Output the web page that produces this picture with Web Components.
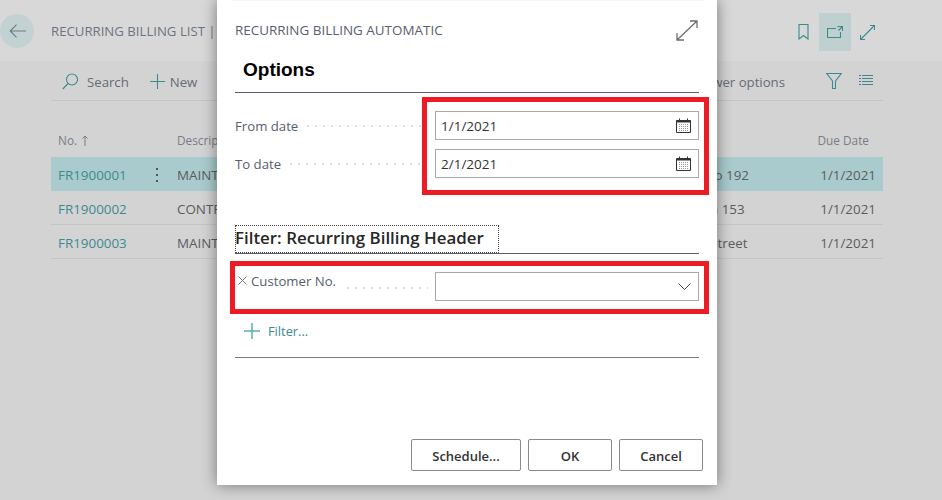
<!DOCTYPE html>
<html lang="en">
<head>
<meta charset="utf-8">
<title>Recurring Billing</title>
<style>
  html, body { margin: 0; height: 500px; overflow: hidden; background: #d3d3d3; }
  body { font-family: "Open Sans", "Noto Sans", sans-serif; font-size: 13px; }
</style>
</head>
<body>
<bc-list-page>
  <bc-page-header slot="header" caption="RECURRING BILLING LIST |"></bc-page-header>
  <bc-toolbar slot="toolbar"></bc-toolbar>
  <bc-list-head slot="list"></bc-list-head>
  <bc-list-row slot="list" selected no="FR1900001" desc="MAINT" addr="Campo 192" due="1/1/2021"></bc-list-row>
  <bc-list-row slot="list" no="FR1900002" desc="CONTR" addr="Ronda 153" due="1/1/2021"></bc-list-row>
  <bc-list-row slot="list" no="FR1900003" desc="MAINT" addr="High Street" due="1/1/2021"></bc-list-row>
</bc-list-page>

<bc-dialog caption="RECURRING BILLING AUTOMATIC">
  <bc-options-title>Options</bc-options-title>
  <bc-field label="From date" value="1/1/2021" kind="date"></bc-field>
  <bc-field label="To date" value="2/1/2021" kind="date"></bc-field>
  <bc-filter-title>Filter: Recurring Billing Header</bc-filter-title>
  <bc-field label="Customer No." kind="select" removable></bc-field>
  <bc-add-filter>Filter...</bc-add-filter>
  <bc-button slot="actions" style="width:110px">Schedule...</bc-button>
  <bc-button slot="actions" style="width:84px">OK</bc-button>
  <bc-button slot="actions" style="width:84px">Cancel</bc-button>
</bc-dialog>

<script>
const TEAL = '#3c8a8e';

class BcListPage extends HTMLElement {
  constructor() {
    super();
    this.attachShadow({ mode: 'open' });
    this.shadowRoot.innerHTML = `
      <style>
        :host { display: flex; flex-direction: column; width: 942px; height: 500px; }
        .body { padding: 0 59px 0 51px; display: flex; flex-direction: column; }
        .list { display: flex; flex-direction: column; margin-top: 21px; }
      </style>
      <slot name="header"></slot>
      <div class="body">
        <slot name="toolbar"></slot>
        <div class="list"><slot name="list"></slot></div>
      </div>
    `;
  }
}

class BcPageHeader extends HTMLElement {
  constructor() {
    super();
    this.attachShadow({ mode: 'open' });
    this.shadowRoot.innerHTML = `
      <style>
        :host { display: flex; align-items: center; height: 61px; background: #d8d8d8; color: #6c7480; }
        .back { width: 34px; height: 34px; margin-right: 17px; border-radius: 50%; background: #c2d2d2; display: flex; align-items: center; justify-content: center; }
        .title { flex: 1; font-size: 13.2px; }
        .icons { display: flex; height: 38px; margin: 3px 59px 0 0; }
        .ico { width: 32px; height: 38px; display: flex; align-items: center; justify-content: center; }
        .ico.on { background: #bfd0d1; }
      </style>
      <div class="back">
        <svg width="17" height="14" viewBox="0 0 17 14" fill="none" stroke="#6e7a7c" stroke-width="1.1"><path d="M17 7H1.200M7.500 .7 1.200 7 7.500 13.300"/></svg>
      </div>
      <div class="title"></div>
      <div class="icons">
        <div class="ico"><svg width="11" height="16" viewBox="0 0 11 16" fill="none" stroke="${TEAL}" stroke-width="1.1"><path d="M1 .5h9v14.500L5.500 11.500 1 15z"/></svg></div>
        <div class="ico on"><svg width="16" height="12" viewBox="0 0 16 12" fill="none" stroke="${TEAL}" stroke-width="1.1"><path d="M9 2.500H.5v9h13V6M10.500 .5H15.500V5M15.500 .5 11.500 4.500"/></svg></div>
        <div class="ico"><svg width="15" height="15" viewBox="0 0 15 15" fill="none" stroke="${TEAL}" stroke-width="1.1"><path d="M10 .5h4.500v4.500M14.500 .5 .5 14.500M.5 10v4.500h4.500"/></svg></div>
      </div>
    `;
    this.shadowRoot.querySelector('.title').textContent = this.getAttribute('caption');
  }
}

class BcToolbar extends HTMLElement {
  constructor() {
    super();
    this.attachShadow({ mode: 'open' });
    this.shadowRoot.innerHTML = `
      <style>
        :host { display: flex; align-items: center; box-sizing: border-box; height: 40px; padding-top: 2px; border-bottom: 1px solid #c4c4ca; color: #666c74; font-size: 13.2px; }
        .act { display: flex; align-items: center; }
        svg { display: block; }
        .search { margin-left: 11px; gap: 9px; }
        .new { margin-left: 21px; gap: 5px; }
        .spacer { flex: 1; }
        .filter { margin-left: 41px; margin-top: -2px; }
        .lines { margin-left: 17px; margin-right: 10px; margin-top: -2px; }
      </style>
      <div class="act search">
        <svg width="16" height="17" viewBox="0 0 16 17" fill="none" stroke="${TEAL}" stroke-width="1.1"><circle cx="10" cy="6.500" r="5.500"/><path d="M6 10.500 .8 16"/></svg>
        <span>Search</span>
      </div>
      <div class="act new">
        <svg width="15" height="15" viewBox="0 0 15 15" fill="none" stroke="${TEAL}" stroke-width="1.1"><path d="M7.500 0v15M0 7.500h15"/></svg>
        <span>New</span>
      </div>
      <div class="spacer"></div>
      <div class="act">Fewer options</div>
      <svg class="filter" width="16" height="16" viewBox="0 0 16 16" fill="none" stroke="${TEAL}" stroke-width="1.1"><path d="M.7 .5h14.600L9.500 8v7.500h-3V8z"/></svg>
      <svg class="lines" width="14" height="11" viewBox="0 0 14 11" fill="none" stroke="${TEAL}" stroke-width="1"><path d="M3 .5h11M3 3.500h11M3 6.500h11M3 9.500h11M0 .5h2M0 3.500h2M0 6.500h2M0 9.500h2"/></svg>
    `;
  }
}

const LIST_COLUMNS = 'grid-template-columns: 96px 30px 501px 1fr 64px;';

class BcListHead extends HTMLElement {
  constructor() {
    super();
    this.attachShadow({ mode: 'open' });
    this.shadowRoot.innerHTML = `
      <style>
        :host { display: grid; ${LIST_COLUMNS} box-sizing: border-box; height: 35px; padding-top: 1px; align-items: center; color: #777d85; font-size: 11.8px; }
        .no { padding-left: 7px; display: flex; align-items: center; gap: 5px; }
        .desc { grid-column: 3; white-space: nowrap; }
        .due { grid-column: 5; white-space: nowrap; justify-self: end; padding-right: 14px; }
      </style>
      <div class="no">No.<svg width="6" height="11" viewBox="0 0 6 11" fill="none" stroke="#777d85"><path d="M3 11V1M.5 3.500 3 1l2.500 2.500"/></svg></div>
      <div class="desc">Descrip</div>
      <div class="due">Due Date</div>
    `;
  }
}

class BcListRow extends HTMLElement {
  constructor() {
    super();
    this.attachShadow({ mode: 'open' });
    this.shadowRoot.innerHTML = `
      <style>
        :host { display: grid; ${LIST_COLUMNS} box-sizing: border-box; height: 34px; padding-top: 2px; align-items: center; border-bottom: 1px solid #c6c6c6; color: #5c5c5c; font-size: 13.4px; }
        :host([selected]) { background: #a9cbcd; border-bottom-color: #a9cbcd; }
        .no { padding-left: 7px; color: ${TEAL}; }
        .more { display: flex; flex-direction: column; gap: 4px; align-items: center; padding-right: 10px; visibility: hidden; }
        :host([selected]) .more { visibility: visible; }
        .more i { width: 2px; height: 2px; background: #555; }
        .desc, .addr { white-space: nowrap; }
        .due { justify-self: end; padding-right: 7px; }
      </style>
      <div class="no"></div>
      <div class="more"><i></i><i></i><i></i></div>
      <div class="desc"></div>
      <div class="addr"></div>
      <div class="due"></div>
    `;
    for (const key of ['no', 'desc', 'addr', 'due']) {
      this.shadowRoot.querySelector('.' + key).textContent = this.getAttribute(key);
    }
  }
}

class BcDialog extends HTMLElement {
  constructor() {
    super();
    this.attachShadow({ mode: 'open' });
    this.shadowRoot.innerHTML = `
      <style>
        :host { display: flex; flex-direction: column; position: absolute; left: 217px; top: 0; width: 500px; height: 485px; box-sizing: border-box; padding: 0 18px 14px 18px; background: #fff; box-shadow: 0 0 14px rgba(0,0,0,.45); }
        .rule { height: 1px; margin: 0 -5px -1px -4px; background: #f6f6f6; }
        .top { display: flex; justify-content: space-between; align-items: center; height: 61px; color: #56606e; font-size: 13.45px; }
        .cap { margin-top: -1px; }
        .top svg { margin-right: 1px; }
        .form { flex: 1; display: flex; flex-direction: column; }
        .actions { display: flex; justify-content: flex-end; gap: 7px; margin-right: -4px; }
        .mark { position: absolute; box-sizing: border-box; border: 5px solid #ed1c24; }
      </style>
      <div class="rule"></div>
      <div class="top">
        <span class="cap"></span>
        <svg width="22" height="21" viewBox="0 0 22 21" fill="none" stroke="#6e6e6e" stroke-width="1.300"><path d="M14 1h7v7M21 1 1 20M1 13v7h7"/></svg>
      </div>
      <div class="form"><slot></slot></div>
      <div class="actions"><slot name="actions"></slot></div>
      <div class="mark" style="left:205px;top:97px;width:287px;height:98px"></div>
      <div class="mark" style="left:13px;top:261px;width:479px;height:53px"></div>
    `;
    this.shadowRoot.querySelector('.cap').textContent = this.getAttribute('caption');
  }
}

class BcOptionsTitle extends HTMLElement {
  constructor() {
    super();
    this.attachShadow({ mode: 'open' });
    this.shadowRoot.innerHTML = `
      <style>
        :host { display: block; height: 31px; padding-left: 8px; border-bottom: 1px solid #56606e; margin-bottom: 18px; font: bold 19px/17px "Liberation Sans", Arial, sans-serif; color: #000; }
      </style>
      <slot></slot>
    `;
  }
}

class BcFilterTitle extends HTMLElement {
  constructor() {
    super();
    this.attachShadow({ mode: 'open' });
    this.shadowRoot.innerHTML = `
      <style>
        :host { display: block; margin-top: 38px; border-bottom: 1px solid #56606e; margin-bottom: 18px; }
        .t { display: block; box-sizing: border-box; height: 28px; width: 264px; border: 1px dotted #444; font-size: 16.9px; line-height: 23px; text-indent: -1px; font-weight: 600; color: #262626; white-space: nowrap; }
      </style>
      <span class="t"><slot></slot></span>
    `;
  }
}

class BcField extends HTMLElement {
  constructor() {
    super();
    this.attachShadow({ mode: 'open' });
    const isDate = this.getAttribute('kind') === 'date';
    const icon = isDate
      ? `<svg width="15" height="15" viewBox="0 0 15 15" fill="none">
           <path d="M.5 2.500h14v12H.5z" stroke="#333"/>
           <path d="M.5 3.500h14" stroke="#333" stroke-width="2"/>
           <path d="M3.500 .5v2M11.500 .5v2" stroke="#333"/>
           <path d="M3 6.500h9M3 8.500h9M3 10.500h9M3 12.500h9" stroke="#999" stroke-dasharray="1 1"/>
         </svg>`
      : `<svg width="13" height="7" viewBox="0 0 13 7" fill="none" stroke="#444" stroke-width="1"><path d="M.5 .5 6.500 6.500 12.500 .5"/></svg>`;
    this.shadowRoot.innerHTML = `
      <style>
        :host { display: flex; align-items: center; height: 29px; margin-bottom: 9px; color: #56606e; font-size: 13.2px; }
        .x { width: 13px; margin-top: -13px; margin-left: 3px; flex: none; display: flex; }
        .label { white-space: nowrap; }
        :host([removable]) .label { margin-top: -12px; }
        .dots { flex: 1; height: 2px; margin: 0 11px 0 9px; background: repeating-linear-gradient(90deg, #dcdcdc 0 2px, transparent 2px 8px); }
        :host([removable]) .dots { margin: 3px 7px 0 11px; }
        .box { flex: none; box-sizing: border-box; width: 264px; height: 100%; border: 1px solid #a9a9a9; display: flex; align-items: center; justify-content: space-between; padding: 0 7px 0 5px; color: #333; font-size: 13.5px; }
      </style>
      ${this.hasAttribute('removable') ? '<span class="x"><svg width="9" height="9" viewBox="0 0 9 9" fill="none" stroke="#777"><path d="M.5 .5l8 8M8.500 .5l-8 8"/></svg></span>' : ''}
      <span class="label"></span>
      <span class="dots"></span>
      <div class="box"><span class="val"></span>${icon}</div>
    `;
    this.shadowRoot.querySelector('.label').textContent = this.getAttribute('label');
    this.shadowRoot.querySelector('.val').textContent = this.getAttribute('value') || '';
  }
}

class BcAddFilter extends HTMLElement {
  constructor() {
    super();
    this.attachShadow({ mode: 'open' });
    this.shadowRoot.innerHTML = `
      <style>
        :host { display: flex; align-items: center; gap: 8px; box-sizing: border-box; height: 57px; margin-top: -9px; padding: 3px 0 0 9px; border-bottom: 1px solid #777; color: ${TEAL}; font-size: 12.8px; }
      </style>
      <svg width="16" height="16" viewBox="0 0 16 16" fill="none" stroke="#56b0b2" stroke-width="1.500"><path d="M8 0v16M0 8h16"/></svg>
      <slot></slot>
    `;
  }
}

class BcButton extends HTMLElement {
  constructor() {
    super();
    this.attachShadow({ mode: 'open' });
    this.shadowRoot.innerHTML = `
      <style>
        :host { display: flex; align-items: center; justify-content: center; box-sizing: border-box; height: 32px; padding-top: 1px; border: 1px solid #8a8a8a; border-radius: 2px; background: #fff; color: #333; font-size: 13px; font-weight: 600; }
      </style>
      <slot></slot>
    `;
  }
}

customElements.define('bc-list-page', BcListPage);
customElements.define('bc-page-header', BcPageHeader);
customElements.define('bc-toolbar', BcToolbar);
customElements.define('bc-list-head', BcListHead);
customElements.define('bc-list-row', BcListRow);
customElements.define('bc-dialog', BcDialog);
customElements.define('bc-options-title', BcOptionsTitle);
customElements.define('bc-filter-title', BcFilterTitle);
customElements.define('bc-field', BcField);
customElements.define('bc-add-filter', BcAddFilter);
customElements.define('bc-button', BcButton);
</script>
</body>
</html>
